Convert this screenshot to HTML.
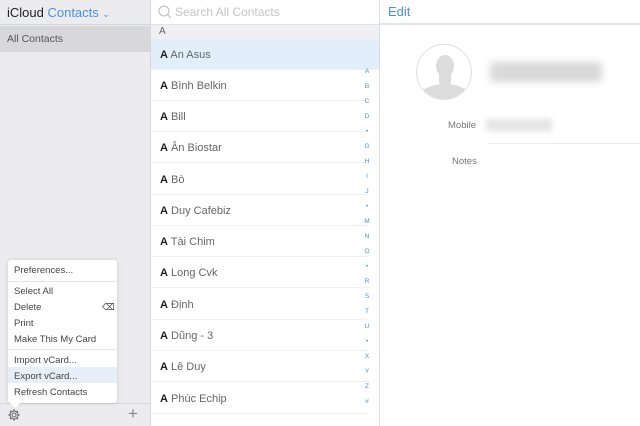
<!DOCTYPE html><html><head><style>
*{margin:0;padding:0;box-sizing:border-box}
body{width:640px;height:426px;overflow:hidden;font-family:"Liberation Sans",sans-serif;background:#fff;position:relative}
.a{position:absolute}
#side{left:0;top:0;width:151px;height:426px;background:#ececef;border-right:1px solid #d6d6d8}
#list{left:151px;top:0;width:229px;height:426px;background:#fff;border-right:1px solid #dcdcde}
.row{position:absolute;left:0;width:218px;height:31px;font-size:11px;color:#666;padding-left:9px;line-height:32px;border-bottom:1px solid #f1f1f3}
.row b{color:#222;font-weight:bold}
.idx{position:absolute;left:211px;width:10px;text-align:center;font-size:6.5px;color:#4a90e2}
.mi{position:absolute;left:6px;font-size:9.5px;color:#444}
</style></head><body>
<div id="side" class="a">
 <div class="a" style="left:0;top:0;width:150px;height:25px;border-bottom:1px solid #cfd8df"></div>
 <div class="a" style="left:7px;top:5px;font-size:13px;color:#222">iCloud <span style="color:#4a90e2">Contacts</span> <span style="color:#4a90e2;font-size:9px">⌄</span></div>
 <div class="a" style="left:0;top:26px;width:150px;height:26px;background:#d8d8db;font-size:10.5px;color:#555;padding:7px 0 0 7px">All Contacts</div>
 <div class="a" style="left:0;top:403px;width:150px;height:23px;border-top:1px solid #d6d6d8"></div>
 <svg class="a" style="left:7px;top:408px" width="14" height="14" viewBox="0 0 14 14"><circle cx="7" cy="7" r="2" fill="none" stroke="#666" stroke-width="1"/><path d="M7 1.5v2M7 10.5v2M1.5 7h2M10.5 7h2M3.1 3.1l1.4 1.4M9.5 9.5l1.4 1.4M3.1 10.9l1.4-1.4M9.5 4.5l1.4-1.4" stroke="#666" stroke-width="1.6"/><circle cx="7" cy="7" r="4" fill="none" stroke="#666" stroke-width="1"/></svg>
 <div class="a" style="left:128px;top:404px;font-size:17px;color:#888;font-weight:300">+</div>
 <div class="a" style="left:8px;top:260px;width:109px;height:143px;background:#fff;border-radius:3px;box-shadow:0 0 4px rgba(0,0,0,.15)">
  <div class="mi" style="top:5px">Preferences...</div>
  <div class="a" style="left:0;top:21px;width:109px;border-top:1px solid #e4e4e4"></div>
  <div class="mi" style="top:26px">Select All</div>
  <div class="mi" style="top:42px">Delete</div>
  <div class="a" style="left:94px;top:42px;font-size:9px;color:#444">⌫</div>
  <div class="mi" style="top:58px">Print</div>
  <div class="mi" style="top:74px">Make This My Card</div>
  <div class="a" style="left:0;top:89px;width:109px;border-top:1px solid #e4e4e4"></div>
  <div class="mi" style="top:95px">Import vCard...</div>
  <div class="a" style="left:0;top:107px;width:109px;height:16px;background:#e6eef8"></div>
  <div class="mi" style="top:111px">Export vCard...</div>
  <div class="mi" style="top:127px">Refresh Contacts</div>
 </div>
 <div class="a" style="left:9px;top:402px;width:0;height:0;border-left:6px solid transparent;border-right:6px solid transparent;border-top:6px solid #fff"></div>
</div>
<div id="list" class="a">
 <div class="a" style="left:0;top:0;width:228px;height:25px;border-bottom:1px solid #dde3e8"></div>
 <svg class="a" style="left:7px;top:5px" width="14" height="14"><circle cx="6" cy="6" r="5" fill="none" stroke="#bbb" stroke-width="1"/><path d="M9.5 9.5l3.5 3.5" stroke="#bbb"/></svg>
 <div class="a" style="left:24px;top:5px;font-size:12px;color:#c4c4c6">Search All Contacts</div>
 <div class="a" style="left:0;top:25px;width:228px;height:15px;background:#f0f0f2;font-size:10px;color:#666;padding:1px 0 0 8px">A</div>
 <div class="row" style="top:39px;background:#e2eefa;width:228px"><b>A</b> An Asus</div>
 <div class="row" style="top:70px"><b>A</b> Bình Belkin</div>
 <div class="row" style="top:101px"><b>A</b> Bill</div>
 <div class="row" style="top:132px"><b>A</b> Ân Biostar</div>
 <div class="row" style="top:164px"><b>A</b> Bò</div>
 <div class="row" style="top:195px"><b>A</b> Duy Cafebiz</div>
 <div class="row" style="top:226px"><b>A</b> Tài Chim</div>
 <div class="row" style="top:257px"><b>A</b> Long Cvk</div>
 <div class="row" style="top:289px"><b>A</b> Định</div>
 <div class="row" style="top:320px"><b>A</b> Dũng - 3</div>
 <div class="row" style="top:351px"><b>A</b> Lê Duy</div>
 <div class="row" style="top:383px"><b>A</b> Phúc Echip</div>
 <div class="idx" style="top:68px">A</div><div class="idx" style="top:83px">B</div><div class="idx" style="top:98px">C</div><div class="idx" style="top:113px">D</div><div class="idx" style="top:128px">•</div><div class="idx" style="top:143px">G</div><div class="idx" style="top:158px">H</div><div class="idx" style="top:173px">I</div><div class="idx" style="top:188px">J</div><div class="idx" style="top:203px">•</div><div class="idx" style="top:218px">M</div><div class="idx" style="top:233px">N</div><div class="idx" style="top:248px">O</div><div class="idx" style="top:263px">•</div><div class="idx" style="top:278px">R</div><div class="idx" style="top:293px">S</div><div class="idx" style="top:308px">T</div><div class="idx" style="top:323px">U</div><div class="idx" style="top:338px">•</div><div class="idx" style="top:353px">X</div><div class="idx" style="top:368px">Y</div><div class="idx" style="top:383px">Z</div><div class="idx" style="top:398px">#</div>
</div>
<div class="a" style="left:380px;top:0;width:260px;height:25px;border-bottom:2px solid #dde7ee"></div>
<div class="a" style="left:388px;top:4px;font-size:13px;color:#4a90e2">Edit</div>
<div class="a" style="left:416px;top:44px;width:56px;height:56px;border-radius:50%;border:1px solid #e0e0e0;overflow:hidden;background:#fff">
 <svg width="56" height="56"><ellipse cx="28" cy="21" rx="9" ry="11" fill="#dcdcdc"/><rect x="22" y="26" width="12" height="14" rx="3" fill="#dcdcdc"/><ellipse cx="28" cy="54" rx="27" ry="15" fill="#dcdcdc"/></svg>
</div>
<div class="a" style="left:490px;top:62px;width:112px;height:20px;background:#d8d8d8;filter:blur(4px);border-radius:4px"></div>
<div class="a" style="left:448px;top:120px;font-size:9.5px;color:#777">Mobile</div>
<div class="a" style="left:486px;top:119px;width:66px;height:12px;background:#e4e4e4;filter:blur(3px)"></div>
<div class="a" style="left:488px;top:143px;width:152px;border-top:1px solid #ececec"></div>
<div class="a" style="left:452px;top:156px;font-size:9.5px;color:#777">Notes</div>
</body></html>
